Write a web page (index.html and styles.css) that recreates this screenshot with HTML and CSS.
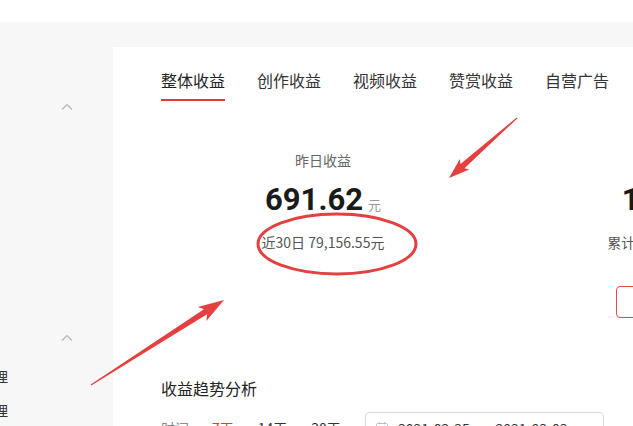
FILE: index.html
```html
<!DOCTYPE html>
<html>
<head>
  <meta charset="utf-8">
  <title>收益</title>
  <link rel="stylesheet" href="styles.css">
</head>
<body>
  <div class="topbar"></div>
  <div class="layout">
    <aside class="sidebar">
      <div class="group">
        <div class="group-head">
          <span>创作</span>
          <svg class="chev" width="12" height="7" viewBox="0 0 12 7"><polyline points="1,6.5 6,1.5 11,6.5" fill="none" stroke="#b5b5b5" stroke-width="1.2"/></svg>
        </div>
        <div class="item">首页</div>
        <div class="item">发布</div>
        <div class="item">作品</div>
        <div class="item">评论</div>
        <div class="item">数据</div>
      </div>
      <div class="group">
        <div class="group-head">
          <span>管理</span>
          <svg class="chev" width="12" height="7" viewBox="0 0 12 7"><polyline points="1,6.5 6,1.5 11,6.5" fill="none" stroke="#b5b5b5" stroke-width="1.2"/></svg>
        </div>
        <div class="item">作品管理</div>
        <div class="item">评论管理</div>
      </div>
    </aside>

    <main class="card">
      <nav class="tabs">
        <a class="tab active">整体收益</a>
        <a class="tab">创作收益</a>
        <a class="tab">视频收益</a>
        <a class="tab">赞赏收益</a>
        <a class="tab">自营广告</a>
      </nav>

      <section class="stats">
        <div class="stat">
          <div class="stat-title">昨日收益</div>
          <div class="stat-value">691.62<span class="unit">元</span></div>
          <div class="stat-sub">近30日 79,156.55元</div>
        </div>
        <div class="stat">
          <div class="stat-title">累计收益</div>
          <div class="stat-value">1.86<span class="unit unit-tight">元</span></div>
          <div class="stat-sub">累计 10,372.95元</div>
          <a class="btn-outline">详细说明</a>
        </div>
      </section>

      <h3 class="trend-title">收益趋势分析</h3>
      <div class="filter">
        <span class="label">时间</span>
        <a class="range active">7天</a>
        <a class="range">14天</a>
        <a class="range">30天</a>
        <div class="date-box">
          <svg class="cal" width="12" height="12" viewBox="0 0 12 12"><rect x="0.5" y="1.5" width="11" height="10" rx="1" fill="none" stroke="#bfbfbf"/><line x1="0.5" y1="4.5" x2="11.5" y2="4.5" stroke="#bfbfbf"/><line x1="3.5" y1="0" x2="3.5" y2="2.5" stroke="#bfbfbf"/><line x1="8.5" y1="0" x2="8.5" y2="2.5" stroke="#bfbfbf"/></svg>
          <span>2021-02-25</span>
          <span class="sep">~</span>
          <span>2021-03-03</span>
        </div>
      </div>
    </main>
  </div>

  <svg class="marks" width="633" height="426" viewBox="0 0 633 426">
    <polygon fill="#e3403f" points="517.3,118.4 464.5,168.3 469.3,169.5 449,178 459.9,158.9 460.5,163.9 516.7,117.6"/>
    <polygon fill="#e3403f" points="91.3,385.4 207.1,314.3 206.3,320.9 224,300 197.9,306.9 203.9,309.3 90.7,384.6"/>
    <ellipse cx="337" cy="244" rx="79" ry="30" fill="none" stroke="#e3403f" stroke-width="3"/>
  </svg>
</body>
</html>
```

FILE: styles.css
```css
html, body {
  overflow: hidden;
}
body {
  margin: 0;
  background: #f7f7f7;
  font-family: "Noto Sans CJK SC", "Noto Sans", sans-serif;
  color: #333;
}
a {
  text-decoration: none;
  cursor: pointer;
}

.topbar {
  height: 22px;
  background: #fff;
}
.layout {
  display: flex;
  margin-left: -87px;
  padding-top: 25px;
}

/* sidebar */
.sidebar {
  flex: 0 0 200px;
  padding-top: 37px;
}
.group {
  margin-bottom: 17px;
}
.group-head {
  height: 44px;
  display: flex;
  align-items: center;
  justify-content: space-between;
  padding: 0 40px 0 39px;
  font-size: 14px;
  color: #999;
}
.item {
  height: 34px;
  line-height: 34px;
  padding-left: 39px;
  font-size: 14px;
  color: #333;
}

/* main card */
.card {
  flex: 0 0 1000px;
  background: #fff;
  padding: 22px 48px 0;
  min-height: 500px;
}
.tabs {
  display: flex;
  gap: 32px;
}
.tab {
  font-size: 16px;
  line-height: 22px;
  padding-bottom: 8px;
  border-bottom: 2px solid transparent;
  color: #333;
}
.tab.active {
  color: #222;
  border-bottom-color: #e33c36;
}

.stats {
  display: grid;
  grid-template-columns: 324px 352px;
  align-items: start;
  padding-top: 49px;
}
.stat {
  display: flex;
  flex-direction: column;
  align-items: center;
}
.stat-title {
  font-size: 14px;
  line-height: 20px;
  color: #666;
}
.stat-value {
  margin-top: 10px;
  font-family: Roboto, "Noto Sans", sans-serif;
  font-size: 31px;
  font-weight: 700;
  line-height: 40px;
  color: #1a1a1a;
}
.stat-value .unit {
  margin-left: 5px;
  font-family: "Noto Sans CJK SC", sans-serif;
  font-size: 13px;
  font-weight: 400;
  color: #999;
}
.stat-value .unit-tight {
  margin-left: 3px;
}
.stat-sub {
  margin-top: 7px;
  font-size: 14px;
  line-height: 20px;
  color: #555;
}
.btn-outline {
  margin-top: 34px;
  height: 32px;
  line-height: 30px;
  box-sizing: border-box;
  padding: 0 16px;
  border: 1px solid #d9504e;
  border-radius: 4px;
  font-size: 14px;
  color: #ee6a35;
}

.trend-title {
  margin: 58px 0 0;
  font-size: 16px;
  font-weight: 400;
  line-height: 24px;
  color: #222;
}
.filter {
  display: flex;
  align-items: center;
  margin-top: 12px;
  font-size: 14px;
}
.filter .label {
  color: #888;
  margin-right: 23px;
}
.range {
  margin-right: 24px;
  color: #333;
}
.range.active {
  color: #e33c36;
}
.date-box {
  display: flex;
  align-items: center;
  width: 239px;
  height: 32px;
  box-sizing: border-box;
  padding: 0 10px;
  border: 1px solid #d9d9d9;
  border-radius: 4px;
  color: #333;
}
.date-box .cal {
  margin-right: 10px;
}
.date-box .sep {
  margin: 0 9px;
}

/* annotation layer */
.marks {
  position: absolute;
  top: 0;
  left: 0;
  pointer-events: none;
}
```
